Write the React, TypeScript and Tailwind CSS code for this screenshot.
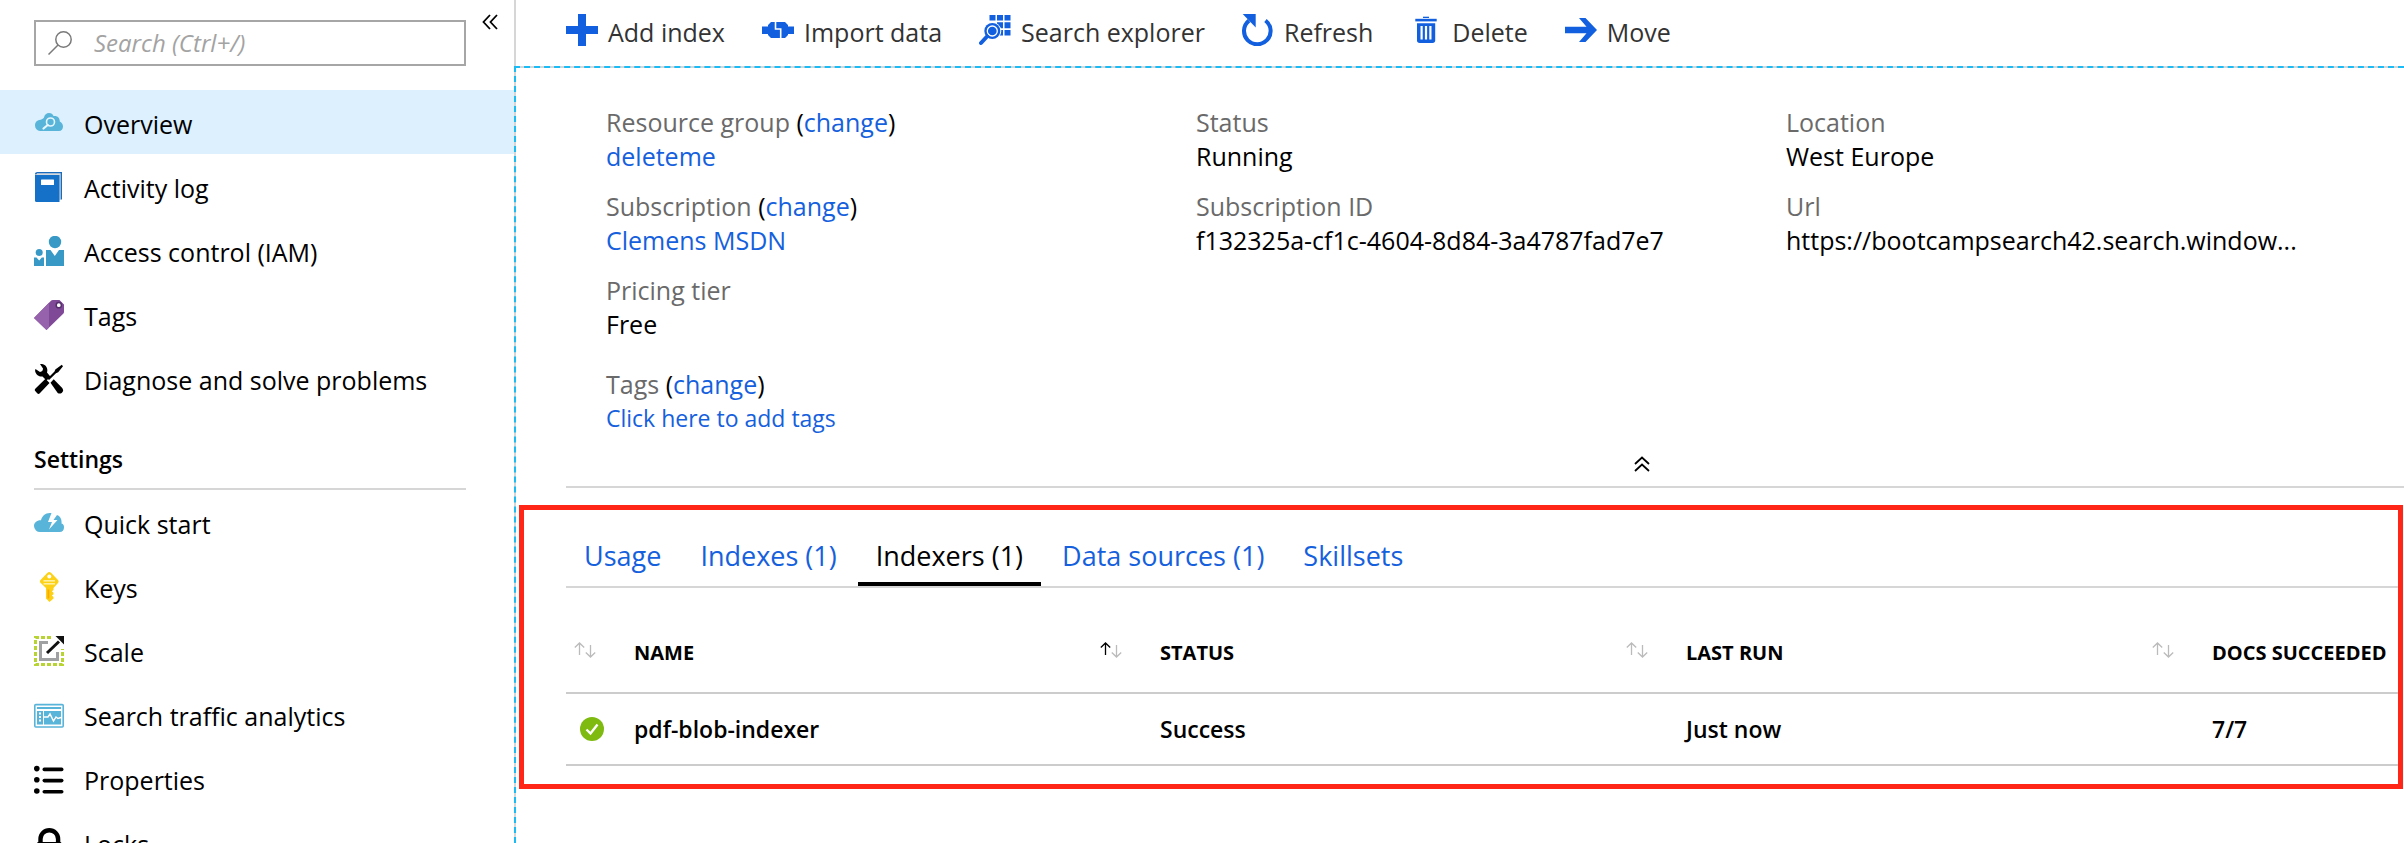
import type { ReactNode } from "react";

function Icon({ children }: { children: ReactNode }) {
  return (
    <svg viewBox="0 0 30 30" className="h-[30px] w-[30px] shrink-0" aria-hidden="true">
      {children}
    </svg>
  );
}

const overviewIcon = (
  <Icon>
    <path d="M6 23a5.500 5.500 0 0 1-5-5.500C1 14 3.500 12 6.500 11.800 7.500 11.500 9 11 10 9.500 10.500 6.500 12.500 5 15 5c2.300 0 3.800 1.200 4.500 3 3.800-.6 6.300 1.500 6.300 5.500C28 14.500 29 16.500 29 18.500 29 21 27.500 23 25 23z" fill="#59b4d9" />
    <circle cx="16.500" cy="14" r="4" fill="#59b4d9" stroke="#e6f6fd" strokeWidth="1.600" />
    <path d="M13.700 17l-4.200 3.500" stroke="#e6f6fd" strokeWidth="2.200" strokeLinecap="round" />
  </Icon>
);

const activityIcon = (
  <Icon>
    <path d="M3.500 0H28v27.500h-3V2.500H1V2C1 .8 2 0 3.500 0z" fill="#1a6bbd" />
    <path d="M3 1.200h23.700V28H25V3H2.200z" fill="#d5d8dc" />
    <path d="M1 3h24.500v27H2.500A1.500 1.500 0 0 1 1 28.500z" fill="#1570c8" />
    <rect x="7" y="7.500" width="13" height="5.500" rx=".6" fill="#fff" />
  </Icon>
);

const accessIcon = (
  <Icon>
    <circle cx="21" cy="6" r="6.200" fill="#3999c6" />
    <path d="M12 14h4.500l4.300 6 4.200-6h5v16H12z" fill="#3999c6" />
    <circle cx="5.200" cy="16.500" r="3.500" fill="#3999c6" />
    <path d="M0 21.500h2.500l2.700 3 2.600-3H10V30H0z" fill="#3999c6" />
  </Icon>
);

const tagIcon = (
  <Icon>
    <path d="M0 18L16.500 1.200Q17.500 0 19 0h6.500L30 4.500V12q0 1-.8 1.800L12.500 30z" fill="#804998" />
    <path d="M0 18L15 2.800v24.700L12.500 30z" fill="#9562ab" />
    <circle cx="24.800" cy="5.200" r="2.600" fill="#fff" stroke="#552f6b" strokeWidth="1.500" />
  </Icon>
);

const toolsIcon = (
  <Icon>
    <path d="M6 0c5-.6 8.500 3.600 7 8.500l3.500 4.200-4 3.800L8.500 12.500C5.500 13 2 11 1.200 7.500c-.2-1.300 0-2 .3-2.500l4.500 3c2-.3 3-1.500 3-3.500z" fill="#000" />
    <path d="M27.800.8L29 2.200l-4.800 6-2.200 1L15 16l-1.500-1.500 7-7 .8-2z" fill="#000" />
    <path d="M11.500 14.800l4 4.200L5.800 29.300Q4.500 30.500 3.200 29.300L1.200 27q-1-1.200.3-2.400z" fill="#000" />
    <path d="M16.500 18.800l3.200-3.500 8.500 8.700q2 3-.5 5-2.200 1.200-4 0z" fill="#000" />
  </Icon>
);

const quickIcon = (
  <Icon>
    <path transform="translate(0 3)" d="M6.500 21A6 6 0 0 1 0 15C0 11.500 3 9 7 9.200 8 4.500 12 1.200 17.500 2L14 11h4l-3 7.500 8.500-9.500h-4l3.500-5c3.500 1 5 5 4.500 8.500 2 .5 2.500 2 2.500 4 0 2.500-1.500 4.500-4.500 4.500z" fill="#59b4d9" />
  </Icon>
);

const keyIcon = (
  <Icon>
    <path d="M13.500.8q1.700-1.500 3.500 0l7 7.200q1.200 1.500 0 3L19.500 16v2l-1.700 1.200 1.700 1.500v1.500l-1.700 1.300 1.700 1.500V26.500L15.500 30l-3.500-3.500V16L6.500 10.800q-1.200-1.400 0-2.800z" fill="#fcd116" />
    <rect x="9.500" y="8" width="11.500" height="1.600" fill="#fff0a0" />
    <rect x="9.500" y="11" width="11.500" height="1.600" fill="#fff0a0" />
    <rect x="13.500" y="17.500" width="1.800" height="9" fill="#ff8c00" opacity=".6" />
    <circle cx="15.300" cy="4.500" r="2" fill="#fff" />
  </Icon>
);

const scaleIcon = (
  <Icon>
    <path d="M17 1.500H1.500v27h27V13" fill="none" stroke="#b8d432" strokeWidth="3" strokeDasharray="4 2" />
    <path d="M14 6.500H6.500v17h17V16" fill="none" stroke="#a0a1a2" strokeWidth="3" />
    <path d="M13 17L25 5.500" stroke="#111" strokeWidth="3" />
    <path d="M21.500 0H30v8.500z" fill="#111" />
  </Icon>
);

const analyticsIcon = (
  <Icon>
    <rect x=".8" y="4.600" width="28.400" height="22.400" rx="1" fill="#fff" stroke="#59b4d9" strokeWidth="1.600" />
    <rect x="3" y="7" width="24" height="2" fill="#59b4d9" />
    <rect x="3" y="11" width="6" height="13.500" fill="#59b4d9" />
    <rect x="10" y="11" width="17" height="13.500" fill="#59b4d9" />
    <path d="M6 12.500v10" stroke="#fff" strokeWidth="2" strokeDasharray="2 1.500" />
    <path d="M10 17h4l2-3 3.500 7 2.500-4 2 1.500 3-1" fill="none" stroke="#fff" strokeWidth="1.400" />
  </Icon>
);

const propertiesIcon = (
  <Icon>
    <g fill="#000">
      <circle cx="2.800" cy="4.600" r="2.800" />
      <circle cx="2.800" cy="15.800" r="2.800" />
      <circle cx="2.800" cy="27" r="2.800" />
      <rect x="8.500" y="3.600" width="21" height="3.600" rx="1.800" />
      <rect x="8.500" y="14.800" width="21" height="3.600" rx="1.800" />
      <rect x="8.500" y="26" width="21" height="3.600" rx="1.800" />
    </g>
  </Icon>
);

const lockIcon = (
  <Icon>
    <path d="M6.500 15v-4a8.800 8.800 0 0 1 17.600 0v4" fill="none" stroke="#000" strokeWidth="4.400" />
    <rect x="3" y="14" width="24.500" height="16" rx="1.500" fill="#000" />
  </Icon>
);

type NavEntry = { label: string; icon: ReactNode; active?: boolean };

const generalItems: NavEntry[] = [
  { label: "Overview", icon: overviewIcon, active: true },
  { label: "Activity log", icon: activityIcon },
  { label: "Access control (IAM)", icon: accessIcon },
  { label: "Tags", icon: tagIcon },
  { label: "Diagnose and solve problems", icon: toolsIcon },
];

const settingsItems: NavEntry[] = [
  { label: "Quick start", icon: quickIcon },
  { label: "Keys", icon: keyIcon },
  { label: "Scale", icon: scaleIcon },
  { label: "Search traffic analytics", icon: analyticsIcon },
  { label: "Properties", icon: propertiesIcon },
  { label: "Locks", icon: lockIcon },
];

function NavList({ items }: { items: NavEntry[] }) {
  return (
    <ul>
      {items.map((item) => (
        <li key={item.label}>
          <a
            href="#"
            className={`flex h-16 items-start gap-5 pt-[18px] pl-[34px] ${item.active ? "bg-[#dcf0fe]" : ""}`}
          >
            {item.icon}
            <span className="leading-8">{item.label}</span>
          </a>
        </li>
      ))}
    </ul>
  );
}

function Sidebar() {
  return (
    <nav className="w-[514px] shrink-0 overflow-hidden">
      <div className="flex items-start pt-5 pl-[34px]">
        <label className="flex h-[46px] w-[432px] items-center border-2 border-[#a6a6a6] pl-3">
          <svg viewBox="0 0 24 24" className="h-6 w-6 shrink-0" fill="none" stroke="#7a7a7a" strokeWidth="1.500" aria-hidden="true">
            <circle cx="15.500" cy="8.500" r="7.700" />
            <path d="M10 14L.5 23.500" />
          </svg>
          <input
            type="text"
            aria-label="Search"
            placeholder="Search (Ctrl+/)"
            className="ml-[22px] w-full bg-transparent text-[24px] italic outline-none placeholder:text-[#a3a3a3]"
          />
        </label>
        <button type="button" aria-label="Collapse menu" className="-mt-1.5 ml-4">
          <svg viewBox="0 0 16 16" className="h-4 w-4" fill="none" stroke="#000" strokeWidth="1.800" aria-hidden="true">
            <path d="M8 1L1.500 8 8 15M15 1L8.500 8l6.500 7" />
          </svg>
        </button>
      </div>
      <div className="mt-6">
        <NavList items={generalItems} />
      </div>
      <h2 className="mr-12 ml-[34px] border-b-2 border-[#d6d6d6] pt-[32px] pb-3 text-[23px] font-semibold">Settings</h2>
      <NavList items={settingsItems} />
    </nav>
  );
}

function CommandIcon({ children }: { children: ReactNode }) {
  return (
    <svg viewBox="0 0 32 32" className="h-8 w-8 shrink-0" fill="#125fdf" aria-hidden="true">
      {children}
    </svg>
  );
}

const commands = [
  { label: "Add index", icon: <path d="M12 0h8v12h12v8H20v12h-8V20H0v-8h12z" /> },
  {
    label: "Import data",
    icon: (
      <>
        <path d="M0 12.500h6V11l3-3h14l3 3v1.500h6v7.500h-6v1l-3 3H9l-3-3v-1H0z" />
        <path d="M13.500 8v7h5.200v9" fill="none" stroke="#fff" strokeWidth="1.600" />
      </>
    ),
  },
  {
    label: "Search explorer",
    icon: (
      <>
        <path d="M10.500 1h6v5.500h-6zM18 1h6v5.500h-6zM25.500 1h6v5.500h-6zM18 8.200h6v6h-6zM25.500 8.200h6v6h-6zM18 16h6v5.500h-6zM25.500 16h6v5.500h-6z" />
        <circle cx="13.300" cy="17" r="9" fill="#fff" />
        <circle cx="13.300" cy="17" r="8" />
        <circle cx="13.300" cy="17" r="5" fill="none" stroke="#fff" strokeWidth="1.300" />
        <path d="M8 22.500L2 29" stroke="#125fdf" strokeWidth="4" strokeLinecap="round" />
      </>
    ),
  },
  {
    label: "Refresh",
    icon: (
      <>
        <path d="M7 6.600A13.300 13.300 0 1 0 23.500 6.500" fill="none" stroke="#125fdf" strokeWidth="4" />
        <path d="M.7 0h13v13.500z" />
      </>
    ),
  },
  {
    label: "Delete",
    icon: (
      <>
        <rect x="13" y="2.700" width="6" height="1.300" />
        <rect x="5.300" y="4.800" width="21.400" height="2.600" />
        <path d="M7 9.300h18.200v17q0 2.700-2.700 2.700H9.700Q7 29 7 26.300z" />
        <path d="M11.600 12v13.500M16 12v13.500M20.400 12v13.500" stroke="#fff" strokeWidth="2.200" />
      </>
    ),
  },
  { label: "Move", icon: <path d="M0 12.700h21.500L14 4h6.500L32 16 20.500 28H14l7.500-8.700H0z" /> },
];

function CommandBar() {
  return (
    <div className="flex h-[66px] items-start gap-x-[37px] border-l-2 border-[#d6d6d6] pt-3.5 pl-[50px] leading-[36px] text-[#333]">
      {commands.map((command) => (
        <button key={command.label} type="button" className="flex items-start gap-2.5 whitespace-nowrap">
          <CommandIcon>{command.icon}</CommandIcon>
          {command.label}
        </button>
      ))}
    </div>
  );
}

function Field({ label, change, children }: { label: string; change?: boolean; children: ReactNode }) {
  return (
    <div>
      <dt>
        <span className="text-[#6a6a6a]">{label}</span>
        {change && (
          <>
            {" ("}
            <a href="#" className="text-[#1560dd]">
              change
            </a>
            )
          </>
        )}
      </dt>
      <dd className="truncate">{children}</dd>
    </div>
  );
}

function Essentials() {
  return (
    <section className="pl-[50px]">
      <div className="border-b-2 border-[#d6d6d6] pt-[37px]">
        <div className="grid grid-cols-3 pr-7 pl-10">
          <dl className="flex flex-col gap-4">
            <Field label="Resource group" change>
              <a href="#" className="text-[#1560dd]">deleteme</a>
            </Field>
            <Field label="Subscription" change>
              <a href="#" className="text-[#1560dd]">Clemens MSDN</a>
            </Field>
            <Field label="Pricing tier">Free</Field>
            <div className="pt-2.5">
              <Field label="Tags" change>
                <a href="#" className="block text-[23px] text-[#1560dd]">Click here to add tags</a>
              </Field>
            </div>
          </dl>
          <dl className="flex flex-col gap-4">
            <Field label="Status">Running</Field>
            <Field label="Subscription ID">f132325a-cf1c-4604-8d84-3a4787fad7e7</Field>
          </dl>
          <dl className="flex flex-col gap-4">
            <Field label="Location">West Europe</Field>
            <Field label="Url">https://bootcampsearch42.search.window...</Field>
          </dl>
        </div>
        <div className="flex justify-center pt-[21px] pb-3.5 pl-[314px]">
          <button type="button" aria-label="Collapse essentials">
            <svg viewBox="0 0 16 16" className="block h-4 w-4" fill="none" stroke="#000" strokeWidth="1.800" aria-hidden="true">
              <path d="M1 8l7-6.500L15 8M1 15l7-6.500 7 6.500" />
            </svg>
          </button>
        </div>
      </div>
    </section>
  );
}

const tabs = ["Usage", "Indexes (1)", "Indexers (1)", "Data sources (1)", "Skillsets"];

function SortArrows({ ascending }: { ascending?: boolean }) {
  return (
    <svg viewBox="0 0 22 16" className="mt-1 h-4 w-[22px] shrink-0" fill="none" strokeWidth="1.300" aria-hidden="true">
      <path d="M5.500 13V1M.8 5.500L5.500 1l4.700 4.500" stroke={ascending ? "#000" : "#bbb"} />
      <path d="M16.500 3v12M11.800 10.500l4.700 4.500 4.700-4.500" stroke="#bbb" />
    </svg>
  );
}

function IndexersPanel() {
  return (
    <section className="mt-[17px] mr-px ml-[3px] border-5 border-[#ff2617] pt-[29px] pb-[18px] pl-[42px]">
      <div role="tablist" className="flex gap-[3px] border-b-2 border-[#d6d6d6] text-[27px]">
        {tabs.map((tab) => (
          <button
            key={tab}
            type="button"
            role="tab"
            aria-selected={tab === "Indexers (1)"}
            className={`border-b-4 px-[18px] pb-[9px] whitespace-nowrap ${
              tab === "Indexers (1)" ? "border-black text-black" : "border-transparent text-[#1560dd]"
            }`}
          >
            {tab}
          </button>
        ))}
      </div>
      <table className="w-full table-fixed border-collapse text-left">
        <thead>
          <tr className="border-b-2 border-[#ccc] text-[20px] leading-[30px]">
            <th className="w-[68px] pt-[50px] pb-6 pl-2 align-top">
              <button type="button" aria-label="Sort by state" className="flex items-start">
                <SortArrows />
              </button>
            </th>
            <th className="w-[526px] pt-[50px] pb-6 align-top">
              <button type="button" className="flex w-full items-start justify-between pr-[38px] font-bold">
                NAME
                <SortArrows ascending />
              </button>
            </th>
            <th className="w-[526px] pt-[50px] pb-6 align-top">
              <button type="button" className="flex w-full items-start justify-between pr-[38px] font-bold">
                STATUS
                <SortArrows />
              </button>
            </th>
            <th className="w-[526px] pt-[50px] pb-6 align-top">
              <button type="button" className="flex w-full items-start justify-between pr-[38px] font-bold">
                LAST RUN
                <SortArrows />
              </button>
            </th>
            <th className="pt-[50px] pb-6 align-top font-bold whitespace-nowrap">DOCS SUCCEEDED</th>
          </tr>
        </thead>
        <tbody>
          <tr className="h-[72px] border-b-2 border-[#ccc] text-[23px] font-semibold">
            <td className="pl-3.5">
              <svg viewBox="0 0 24 24" className="h-6 w-6" role="img" aria-label="Healthy">
                <circle cx="12" cy="12" r="12" fill="#7fba10" />
                <path d="M6.500 12.500l4 4 7-9" fill="none" stroke="#fff" strokeWidth="2.400" />
              </svg>
            </td>
            <td>pdf-blob-indexer</td>
            <td>Success</td>
            <td>Just now</td>
            <td>7/7</td>
          </tr>
        </tbody>
      </table>
    </section>
  );
}

export default function App() {
  return (
    <div className="flex h-screen overflow-hidden bg-white font-['Open_Sans','Noto_Sans',sans-serif] text-[25px] leading-[34px] text-black">
      <Sidebar />
      <main className="flex min-w-0 flex-1 flex-col">
        <CommandBar />
        <div className="flex flex-1 flex-col border-t-2 border-l-2 border-dashed border-[#1bbcf5] bg-[#d6d6d6]">
          <div className="flex-1 bg-white">
            <Essentials />
            <IndexersPanel />
          </div>
        </div>
      </main>
    </div>
  );
}
